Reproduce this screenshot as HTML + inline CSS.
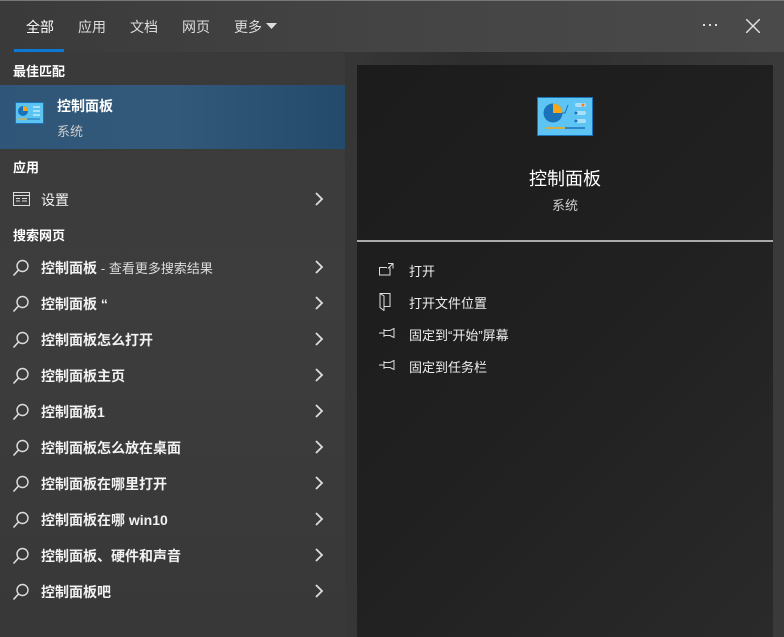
<!DOCTYPE html>
<html><head><meta charset="utf-8"><style>
*{margin:0;padding:0;box-sizing:border-box}
body{width:784px;height:637px;overflow:hidden;font-family:"Liberation Sans","Noto Sans CJK SC",sans-serif;color:#fff;background:linear-gradient(90deg,#3c3c3c 0%,#363636 45%,#2e2e2e 60%,#3a3a3a 100%);position:relative}
.top{position:absolute;left:0;top:0;width:784px;height:52px;background:linear-gradient(90deg,#3a3a3a,#444 50%,#4a4a4a);border-top:1px solid #777}
.tab{position:absolute;top:16px;font-size:14px;color:#ddd}
.ul{position:absolute;left:14px;top:48px;width:50px;height:3px;background:#0a78d4}
.left{position:absolute;left:0;top:53px;width:345px;height:584px;background:linear-gradient(180deg,#3a3a3a,#3d3d3d 40%,#383838)}
.hdr{position:absolute;left:13px;font-size:13px;font-weight:bold;color:#fff}
.best{position:absolute;left:0;top:85px;width:345px;height:64px;background:linear-gradient(90deg,#2f5678,#33597a 50%,#234a6b)}
.row{position:absolute;left:0;width:345px;height:36px}
.row .t{position:absolute;left:41px;top:9px;font-size:14px;font-weight:bold;color:#f2f2f2;white-space:nowrap}
.row .t span{font-weight:normal;font-size:13px;color:#ddd}
.row svg.s{position:absolute;left:12px;top:10px}
.chev{position:absolute;left:314px;top:11px}
.right{position:absolute;left:357px;top:65px;width:416px;height:572px;background:linear-gradient(135deg,#1c1c1c,#202020 50%,#2a2a2a)}
.act{position:absolute;left:52px;font-size:13px;color:#eee}
.ai{position:absolute;left:22px}
</style></head><body>
<div class="top">
<div class="tab" style="left:26px;color:#fff">全部</div>
<div class="tab" style="left:78px">应用</div>
<div class="tab" style="left:130px">文档</div>
<div class="tab" style="left:182px">网页</div>
<div class="tab" style="left:234px">更多</div>
<svg style="position:absolute;left:266px;top:22px" width="11" height="7"><path d="M0 0h11L5.5 6z" fill="#ddd"/></svg>
<svg style="position:absolute;left:703px;top:23px" width="16" height="4"><rect x="0" y="0" width="2" height="2" fill="#ddd"/><rect x="6" y="0" width="2" height="2" fill="#ddd"/><rect x="12" y="0" width="2" height="2" fill="#ddd"/></svg>
<svg style="position:absolute;left:746px;top:18px" width="14" height="14"><path d="M0 0L14 14M14 0L0 14" stroke="#ddd" stroke-width="1.5"/></svg>
<div class="ul"></div>
</div>
<div class="left"></div>
<div class="hdr" style="top:61px">最佳匹配</div>
<div class="best">
<svg style="position:absolute;left:15px;top:17px" width="29" height="22"><rect x="0.5" y="0.5" width="28" height="21" fill="#5cc4f3" stroke="#1a73b8"/><circle cx="8" cy="9" r="5" fill="#1a73b8"/><path d="M8 4a5 5 0 0 1 5 5H8z" fill="#f7a814"/><rect x="18" y="4" width="7" height="2" fill="#a8e0fa"/><rect x="18" y="8" width="7" height="2" fill="#a8e0fa"/><rect x="18" y="12" width="7" height="2" fill="#a8e0fa"/><path d="M3 17h9" stroke="#f7a814"/><path d="M12 17h13" stroke="#1a73b8"/></svg>
<div style="position:absolute;left:57px;top:11px;font-size:14px;font-weight:bold">控制面板</div>
<div style="position:absolute;left:57px;top:36px;font-size:13px;color:#ccc">系统</div>
</div>
<div class="hdr" style="top:157px">应用</div>
<div class="row" style="top:181px">
<svg style="position:absolute;left:13px;top:11px" width="17" height="14"><rect x="0.5" y="0.5" width="16" height="13" fill="none" stroke="#ddd"/><path d="M0.5 3.5h16M3 6.5h4M3 9h4M9 6.5h5M9 9h5" stroke="#ddd"/></svg>
<div class="t" style="font-weight:normal">设置</div>
<svg class="chev" width="10" height="14"><path d="M2 1l6 6-6 6" fill="none" stroke="#ddd" stroke-width="1.8"/></svg>
</div>
<div class="hdr" style="top:225px">搜索网页</div>
<div id="rows"></div>
<div class="right">
<svg style="position:absolute;left:180px;top:32px" width="56" height="39"><rect x="0.5" y="0.5" width="55" height="38" fill="#5ec4f3" stroke="#1a73b8"/><circle cx="16" cy="16" r="9.5" fill="#1a73b8"/><path d="M16 6.5a9.5 9.5 0 0 1 9.5 9.5H16z" fill="#f7a814"/><path d="M25 16h3l3-8" stroke="#1a73b8" fill="none"/><rect x="38" y="6" width="11" height="4" rx="2" fill="#a8e0fa"/><circle cx="46" cy="8" r="1.5" fill="#f77b14"/><rect x="38" y="14" width="11" height="4" rx="2" fill="#a8e0fa"/><circle cx="39" cy="16" r="1.5" fill="#1a73b8"/><rect x="38" y="22" width="11" height="4" rx="2" fill="#a8e0fa"/><circle cx="39" cy="24" r="1.5" fill="#1a73b8"/><path d="M8 31h20" stroke="#f7a814" stroke-width="1.5"/><path d="M28 31h20" stroke="#1a73b8" stroke-width="1.5"/></svg>
<div style="position:absolute;left:0;width:416px;top:100px;text-align:center;font-size:18px">控制面板</div>
<div style="position:absolute;left:0;width:416px;top:130px;text-align:center;font-size:13px;color:#ccc">系统</div>
<div style="position:absolute;left:0;top:175px;width:416px;height:2px;background:#aaa"></div>
<svg class="ai" style="top:198px" width="15" height="13"><path d="M11 4.5V12H0.5V4.5H8M9 0.5h5v5M14 0.5L9 5.5" fill="none" stroke="#ddd"/></svg>
<div class="act" style="top:196px">打开</div>
<svg class="ai" style="top:228px" width="12" height="18"><path d="M1 0.5v14l4 3V3zM1 0.5h10v13H5" fill="none" stroke="#ddd"/></svg>
<div class="act" style="top:228px">打开文件位置</div>
<svg class="ai" style="top:263px" width="16" height="10"><path d="M0 5h5M5 1v8M5 2.5h6l4-2v9l-4-2H5" fill="none" stroke="#ddd"/></svg>
<div class="act" style="top:260px">固定到“开始”屏幕</div>
<svg class="ai" style="top:295px" width="16" height="10"><path d="M0 5h5M5 1v8M5 2.5h6l4-2v9l-4-2H5" fill="none" stroke="#ddd"/></svg>
<div class="act" style="top:292px">固定到任务栏</div>
</div>
<script>
var items=['控制面板 <span>- 查看更多搜索结果</span>','控制面板 “','控制面板怎么打开','控制面板主页','控制面板1','控制面板怎么放在桌面','控制面板在哪里打开','控制面板在哪 win10','控制面板、硬件和声音','控制面板吧'];
var h='';items.forEach(function(t,i){h+='<div class="row" style="top:'+(249+i*36)+'px"><svg class="s" width="18" height="18"><circle cx="10.5" cy="7" r="5.5" fill="none" stroke="#ddd" stroke-width="1.4"/><path d="M6.5 11L1.5 16.5" stroke="#ddd" stroke-width="1.6"/></svg><div class="t">'+t+'</div><svg class="chev" width="10" height="14"><path d="M2 1l6 6-6 6" fill="none" stroke="#ddd" stroke-width="1.8"/></svg></div>';});
document.getElementById('rows').outerHTML=h;
</script>
</body></html>
